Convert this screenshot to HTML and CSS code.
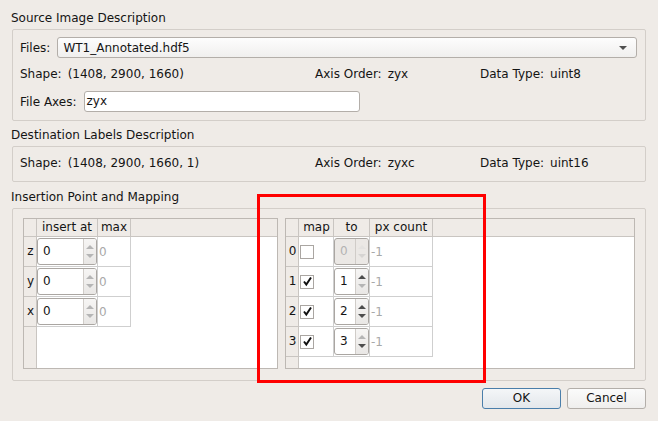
FILE: index.html
```html
<!DOCTYPE html>
<html>
<head>
<meta charset="utf-8">
<link rel="stylesheet" href="styles.css">
</head>
<body>
<div class="dialog">
  <div class="group">
    <div class="group-title">Source Image Description</div>
    <div class="frame frame-src">
      <div class="row">
        <span class="lbl">Files:</span>
        <div class="combo"><span class="combo-text">WT1_Annotated.hdf5</span><span class="caret"></span></div>
      </div>
      <div class="info">
        <div class="pair"><span>Shape:</span><span>(1408, 2900, 1660)</span></div>
        <div class="pair"><span>Axis Order:</span><span>zyx</span></div>
        <div class="pair"><span>Data Type:</span><span>uint8</span></div>
      </div>
      <div class="row">
        <span class="lbl">File Axes:</span>
        <div class="input">zyx</div>
      </div>
    </div>
  </div>

  <div class="group group-dest">
    <div class="group-title">Destination Labels Description</div>
    <div class="frame frame-dest">
      <div class="info">
        <div class="pair"><span>Shape:</span><span>(1408, 2900, 1660, 1)</span></div>
        <div class="pair"><span>Axis Order:</span><span>zyxc</span></div>
        <div class="pair"><span>Data Type:</span><span>uint16</span></div>
      </div>
    </div>
  </div>

  <div class="group group-ins">
    <div class="group-title">Insertion Point and Mapping</div>
    <div class="frame frame-ins">
      <div class="tbl tbl-left">
        <div class="thead">
          <div class="corner"></div>
          <div class="th c-ins">insert at</div>
          <div class="th c-max">max</div>
        </div>
        <div class="tbody">
          <div class="vhead">
            <div class="vh">z</div>
            <div class="vh">y</div>
            <div class="vh">x</div>
          </div>
          <div class="cells">
            <div class="tr">
              <div class="td c-ins"><div class="spin spin-wide"><span class="spin-val">0</span><span class="spin-btns"><i class="up off"></i><i class="dn off"></i></span></div></div>
              <div class="td c-max dim">0</div>
            </div>
            <div class="tr">
              <div class="td c-ins"><div class="spin spin-wide"><span class="spin-val">0</span><span class="spin-btns"><i class="up off"></i><i class="dn off"></i></span></div></div>
              <div class="td c-max dim">0</div>
            </div>
            <div class="tr">
              <div class="td c-ins"><div class="spin spin-wide"><span class="spin-val">0</span><span class="spin-btns"><i class="up off"></i><i class="dn off"></i></span></div></div>
              <div class="td c-max dim">0</div>
            </div>
          </div>
        </div>
      </div>

      <div class="tbl tbl-right">
        <div class="thead">
          <div class="corner"></div>
          <div class="th c-map">map</div>
          <div class="th c-to">to</div>
          <div class="th c-px">px count</div>
        </div>
        <div class="tbody">
          <div class="vhead">
            <div class="vh">0</div>
            <div class="vh">1</div>
            <div class="vh">2</div>
            <div class="vh">3</div>
          </div>
          <div class="cells">
            <div class="tr">
              <div class="td c-map"><span class="check"></span></div>
              <div class="td c-to"><div class="spin spin-dis"><span class="spin-val">0</span><span class="spin-btns"><i class="up faint"></i><i class="dn faint"></i></span></div></div>
              <div class="td c-px dim">-1</div>
            </div>
            <div class="tr">
              <div class="td c-map"><span class="check"><svg width="11" height="11" viewBox="0 0 11 11"><path d="M2 5.5 L4.3 8.5 L9 1.5" fill="none" stroke="#111" stroke-width="2"/></svg></span></div>
              <div class="td c-to"><div class="spin"><span class="spin-val">1</span><span class="spin-btns"><i class="up"></i><i class="dn off"></i></span></div></div>
              <div class="td c-px dim">-1</div>
            </div>
            <div class="tr">
              <div class="td c-map"><span class="check"><svg width="11" height="11" viewBox="0 0 11 11"><path d="M2 5.5 L4.3 8.5 L9 1.5" fill="none" stroke="#111" stroke-width="2"/></svg></span></div>
              <div class="td c-to"><div class="spin"><span class="spin-val">2</span><span class="spin-btns"><i class="up"></i><i class="dn"></i></span></div></div>
              <div class="td c-px dim">-1</div>
            </div>
            <div class="tr">
              <div class="td c-map"><span class="check"><svg width="11" height="11" viewBox="0 0 11 11"><path d="M2 5.5 L4.3 8.5 L9 1.5" fill="none" stroke="#111" stroke-width="2"/></svg></span></div>
              <div class="td c-to"><div class="spin"><span class="spin-val">3</span><span class="spin-btns"><i class="up off"></i><i class="dn"></i></span></div></div>
              <div class="td c-px dim">-1</div>
            </div>
          </div>
        </div>
      </div>
    </div>
  </div>

  <div class="buttons">
    <div class="btn btn-ok">OK</div>
    <div class="btn">Cancel</div>
  </div>

  <div class="highlight"></div>
</div>
</body>
</html>
```

FILE: styles.css
```css
* { box-sizing: border-box; }
html, body {
  margin: 0;
  padding: 0;
  background: #efebe7;
}
body {
  width: 658px;
  height: 421px;
  overflow: hidden;
  font-family: "DejaVu Sans", sans-serif;
  font-size: 12px;
  color: #141414;
}
.dialog {
  position: relative;
  height: 421px;
  padding: 10px 12px 12px 12px;
  display: flex;
  flex-direction: column;
}
.group-title {
  height: 16px;
  line-height: 16px;
  margin-bottom: 3px;
  margin-left: -1px;
}
.group-dest { margin-top: 6px; }
.group-ins { margin-top: 7px; }
.frame {
  border: 1px solid #d3cec9;
  border-radius: 2px;
}
.frame-src {
  height: 92px;
  padding: 7px 8px 8px 7px;
  display: flex;
  flex-direction: column;
  gap: 8px;
}
.frame-dest {
  height: 36px;
  padding: 8px 8px 9px 7px;
}
.row {
  display: flex;
  align-items: center;
  gap: 7px;
  height: 21px;
}
.lbl { white-space: nowrap; }
.combo {
  flex: 1;
  height: 21px;
  border: 1px solid #b3aea9;
  border-radius: 3px;
  background: linear-gradient(#fdfdfd, #f0efee);
  display: flex;
  align-items: center;
  padding: 0 9px 0 5px;
}
.combo-text { flex: 1; }
.caret {
  width: 0;
  height: 0;
  border-left: 4px solid transparent;
  border-right: 4px solid transparent;
  border-top: 4px solid #505050;
}
.input {
  width: 276px;
  height: 21px;
  border: 1px solid #b3aea9;
  border-radius: 3px;
  background: #fff;
  line-height: 19px;
  padding-left: 2px;
}
.info {
  display: grid;
  grid-template-columns: 295px 165px 1fr;
  height: 17px;
  line-height: 17px;
}
.pair { display: flex; gap: 6px; white-space: nowrap; }

.frame-ins {
  height: 173px;
  padding: 9px 10px 11px 10px;
  display: flex;
  gap: 7px;
}
.tbl {
  border: 1px solid #bdb8b3;
  background: #fff;
  display: flex;
  flex-direction: column;
  height: 151px;
}
.tbl-left { width: 255px; }
.tbl-right { width: 350px; }
.thead {
  display: flex;
  height: 18px;
  background: #efebe7;
  border-bottom: 1px solid #c9c5c1;
  flex: none;
}
.corner {
  width: 13px;
  border-right: 1px solid #c9c5c1;
}
.th {
  border-right: 1px solid #c9c5c1;
  text-align: center;
  line-height: 17px;
  white-space: nowrap;
}
.c-ins { width: 61px; }
.c-max { width: 33px; }
.c-map { width: 35px; }
.c-to { width: 36px; }
.c-px { width: 63px; }
.tbody {
  flex: 1;
  display: flex;
}
.vhead {
  width: 13px;
  background: #efebe7;
  border-right: 1px solid #c9c5c1;
}
.vh {
  height: 30px;
  border-bottom: 1px solid #c9c5c1;
  line-height: 29px;
  text-align: center;
  padding-left: 1px;
}
.cells { display: flex; flex-direction: column; }
.tr { display: flex; height: 30px; }
.td {
  height: 30px;
  border-right: 1px solid #cfcfcf;
  border-bottom: 1px solid #cfcfcf;
  display: flex;
  align-items: center;
}
.dim {
  color: #a9a9a9;
  align-items: center;
  padding-left: 1px;
}
.c-map { padding-left: 1px; }
.spin {
  height: 27px;
  width: 100%;
  border: 1px solid #aaa6a2;
  border-radius: 3px;
  background: #fff;
  display: flex;
  margin-top: 1px;
  margin-bottom: 1px;
}
.spin-val {
  flex: 1;
  line-height: 25px;
  padding-left: 5px;
}
.spin-btns {
  width: 13px;
  border-left: 1px solid #d0ccc8;
  background: linear-gradient(#f6f5f4, #e9e7e5);
  border-radius: 0 2px 2px 0;
  display: flex;
  flex-direction: column;
  align-items: center;
  justify-content: center;
  gap: 5px;
}
.spin-btns i {
  display: block;
  width: 0;
  height: 0;
  border-left: 4px solid transparent;
  border-right: 4px solid transparent;
}
.spin-btns .up { border-bottom: 4px solid #4d4d4d; }
.spin-btns .dn { border-top: 4px solid #4d4d4d; }
.spin-btns .up.off { border-bottom-color: #b5b5b5; }
.spin-btns .dn.off { border-top-color: #b5b5b5; }
.spin-btns .up.faint { border-bottom-color: #e4e2e0; }
.spin-btns .dn.faint { border-top-color: #d6d4d2; }
.spin-dis { background: #ebe8e5; }
.spin-dis .spin-val { color: #b3b3b3; }
.spin-dis .spin-btns { background: #ebe8e5; }
.check {
  width: 14px;
  height: 14px;
  border: 1px solid #aaa6a2;
  background: #fff;
  display: flex;
  align-items: center;
  justify-content: center;
}
.buttons {
  margin-top: 7px;
  display: flex;
  justify-content: flex-end;
  gap: 6px;
}
.btn {
  width: 79px;
  height: 21px;
  border: 1px solid #b3aea9;
  border-radius: 3px;
  background: linear-gradient(#fbfbfb, #efeeed);
  text-align: center;
  line-height: 19px;
}
.btn-ok {
  border-color: #4a7eaa;
  background: linear-gradient(#f4f6f8, #e3e7eb);
}
.highlight {
  position: absolute;
  left: 257px;
  top: 194px;
  width: 229px;
  height: 189px;
  border: 3px solid #ff0000;
}
```
